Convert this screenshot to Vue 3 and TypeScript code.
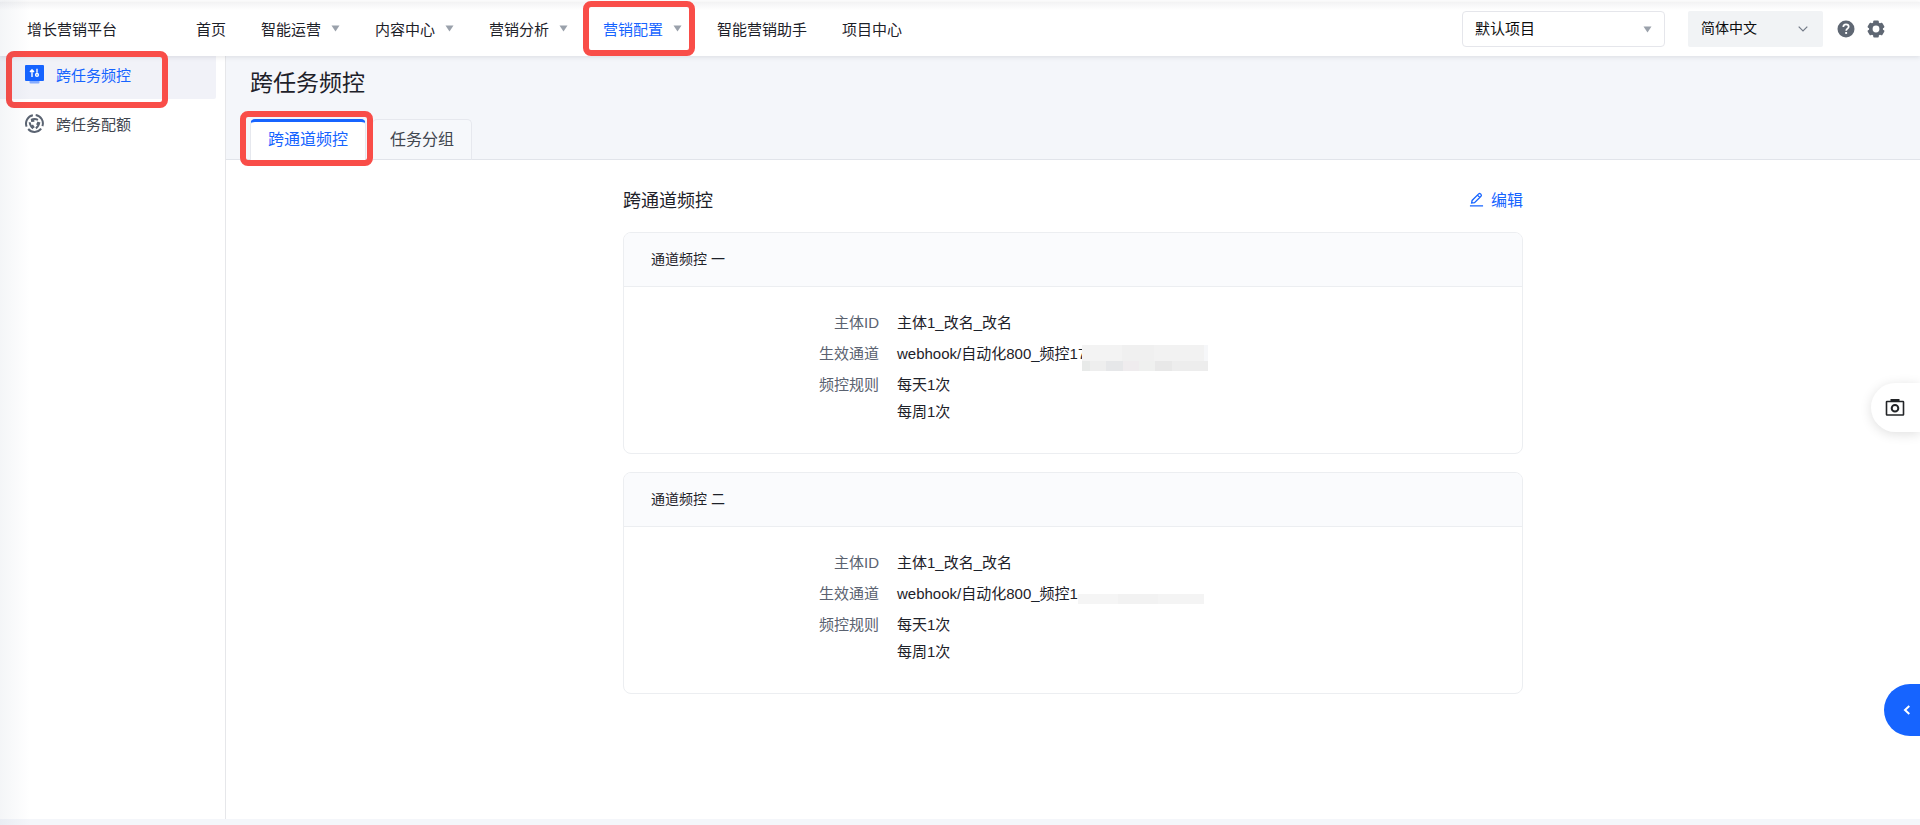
<script setup lang="ts">
import { ref } from 'vue'

interface NavItem {
  label: string
  menu?: boolean
  marked?: boolean
}

interface Rule {
  title: string
  subject: string
  channel: string
  mask: 'tall' | 'thin'
  limits: string[]
}

const navItems: NavItem[] = [
  { label: '首页' },
  { label: '智能运营', menu: true },
  { label: '内容中心', menu: true },
  { label: '营销分析', menu: true },
  { label: '营销配置', menu: true, marked: true },
  { label: '智能营销助手' },
  { label: '项目中心' },
]

const rules: Rule[] = [
  { title: '通道频控 一', subject: '主体1_改名_改名', channel: 'webhook/自动化800_频控17', mask: 'tall', limits: ['每天1次', '每周1次'] },
  { title: '通道频控 二', subject: '主体1_改名_改名', channel: 'webhook/自动化800_频控1', mask: 'thin', limits: ['每天1次', '每周1次'] },
]

const tabs = ['跨通道频控', '任务分组']
const activeTab = ref(0)
const project = ref('默认项目')
const language = ref('简体中文')
</script>

<template>
  <div class="page">
    <header class="topbar">
      <span class="brand">增长营销平台</span>
      <nav class="main-nav" aria-label="主导航">
        <a v-for="item in navItems" :key="item.label" href="#" class="nav-link" :class="{ current: item.marked }">
          {{ item.label }}
          <svg v-if="item.menu" class="caret" viewBox="0 0 9 7" aria-hidden="true"><path d="M.5.5h8L4.500 6.500z" /></svg>
          <span v-if="item.marked" class="callout nav-callout"></span>
        </a>
      </nav>
      <div class="tools">
        <div class="picker project">
          <select v-model="project" aria-label="项目">
            <option>默认项目</option>
          </select>
          <svg class="caret picker-icon" viewBox="0 0 9 7" aria-hidden="true"><path d="M.5.5h8L4.500 6.500z" /></svg>
        </div>
        <div class="picker language">
          <select v-model="language" aria-label="语言">
            <option>简体中文</option>
          </select>
          <svg class="chevron picker-icon" viewBox="0 0 10 6" aria-hidden="true"><path d="M.7.7 5 5 9.300.7" /></svg>
        </div>
        <button type="button" class="icon-button" aria-label="帮助">
          <svg viewBox="0 0 18 18" aria-hidden="true">
            <circle cx="9" cy="9" r="8.500" fill="#5f6773" />
            <path d="M6.300 7.100C6.300 5.300 7.400 4.300 9 4.300s2.700 1 2.700 2.400c0 1.900-2.500 2-2.500 4" fill="none" stroke="#fff" stroke-width="1.700" />
            <rect x="8.200" y="12" width="1.900" height="1.900" fill="#fff" />
          </svg>
        </button>
        <button type="button" class="icon-button" aria-label="设置">
          <svg viewBox="0 0 18 18" aria-hidden="true">
            <circle cx="9" cy="9" r="5.200" fill="none" stroke="#5f6773" stroke-width="3.600" />
            <g fill="#5f6773">
              <rect v-for="n in 6" :key="n" x="6.200" y=".5" width="5.600" height="4" rx="1" :transform="`rotate(${n * 60} 9 9)`" />
            </g>
          </svg>
        </button>
      </div>
    </header>

    <div class="body">
      <aside class="sidebar">
        <nav class="side-nav" aria-label="侧边导航">
          <a href="#" class="side-link selected">
            <svg viewBox="0 0 19 19" aria-hidden="true">
              <rect x="4.500" y="15" width="10" height="3.500" rx="1" fill="#86acff" />
              <rect width="19" height="16" rx="1" fill="#1664ff" />
              <g stroke="#fff" stroke-width="1.400" fill="none">
                <path d="M7 4.500V12M5 7l2-2.200L9 7M12 3.800v4" />
                <circle cx="12" cy="9.900" r="1.400" />
              </g>
            </svg>
            跨任务频控
            <span class="callout side-callout"></span>
          </a>
          <a href="#" class="side-link">
            <svg viewBox="0 0 19 19" aria-hidden="true">
              <g fill="none" stroke="#5b6472" stroke-width="2">
                <g v-for="n in 3" :key="n" :transform="`rotate(${n * 120} 9.500 9.500)`">
                  <path d="M10.700 1.100A8.400 8.400 0 0 1 17.400 12.200" />
                  <path d="M6 5.900Q9.500 4.300 13 5.900" />
                  <path d="M13.400 7.800 12 10.800" />
                </g>
              </g>
            </svg>
            跨任务配额
          </a>
        </nav>
      </aside>

      <main class="main">
        <div class="heading">
          <h1>跨任务频控</h1>
          <div class="tabs" role="tablist">
            <button v-for="(tab, i) in tabs" :key="tab" type="button" role="tab" class="tab" :class="{ active: activeTab === i }" :aria-selected="activeTab === i" @click="activeTab = i">
              {{ tab }}
              <span v-if="i === 0" class="callout tab-callout"></span>
            </button>
          </div>
        </div>

        <section class="content">
          <div class="section-head">
            <h2>跨通道频控</h2>
            <button type="button" class="edit">
              <svg viewBox="0 0 16 16" aria-hidden="true">
                <path d="M2.800 11.800 3.300 9 10.300 2q1-.9 2 0l.5.600q.9 1 0 1.900l-6.900 6.800zM9 3.300l2.500 2.500M1 14.800h14" />
              </svg>
              编辑
            </button>
          </div>

          <article v-for="rule in rules" :key="rule.title" class="card">
            <h3>{{ rule.title }}</h3>
            <dl>
              <dt>主体ID</dt>
              <dd>{{ rule.subject }}</dd>
              <dt>生效通道</dt>
              <dd><span class="masked">{{ rule.channel }}<span class="mask" :class="rule.mask"></span></span></dd>
              <dt>频控规则</dt>
              <dd><div v-for="limit in rule.limits" :key="limit">{{ limit }}</div></dd>
            </dl>
          </article>
        </section>
      </main>
    </div>

    <button type="button" class="float-button capture" aria-label="截图">
      <svg viewBox="0 0 20 20" aria-hidden="true">
        <path d="M5.500 4V1h9v3z" fill="#222427" />
        <rect x="1.500" y="3.500" width="17" height="13.500" rx=".5" fill="none" stroke="#222427" stroke-width="1.600" />
        <circle cx="10" cy="10.300" r="3.300" fill="none" stroke="#222427" stroke-width="2" />
      </svg>
    </button>
    <button type="button" class="float-button expand" aria-label="展开">
      <svg viewBox="0 0 8 10" aria-hidden="true"><path d="M6.300 1 2 5l4.300 4" /></svg>
    </button>
  </div>
</template>

<style>
body {
  margin: 0;
  background: #f4f6fa;
}
</style>

<style scoped>
* {
  box-sizing: border-box;
}

.page {
  position: relative;
  display: flex;
  flex-direction: column;
  min-height: 100vh;
  padding: 2px 0 6px;
  background: linear-gradient(#fff 2px, #f4f6fa 2px);
  font-family: "Liberation Sans", "Noto Sans CJK SC", sans-serif;
  font-size: 15px;
  color: #1d2129;
}

.page::after {
  content: "";
  position: absolute;
  z-index: 4;
  inset: 0 auto 0 0;
  width: 30px;
  background: linear-gradient(90deg, rgba(40, 70, 110, 0.05), rgba(40, 70, 110, 0));
  pointer-events: none;
}

a {
  color: inherit;
  text-decoration: none;
}

button {
  padding: 0;
  border: 0;
  background: none;
  font: inherit;
  cursor: pointer;
}

h1,
h2,
h3,
dl,
dd {
  margin: 0;
  font-weight: 400;
}

.callout {
  position: absolute;
  z-index: 3;
  border: 6px solid #f94d48;
  border-radius: 8px;
  pointer-events: none;
}

.topbar {
  position: relative;
  z-index: 2;
  display: flex;
  align-items: center;
  height: 54px;
  padding: 0 35px 0 27px;
  background: linear-gradient(#f3f3f4, #fff 8px);
  box-shadow: 0 1px 5px rgba(30, 30, 50, 0.12);
}

.brand {
  width: 169px;
  padding-bottom: 2px;
}

.main-nav {
  display: flex;
  gap: 35px;
  height: 100%;
}

.nav-link {
  position: relative;
  display: flex;
  align-items: center;
  gap: 10px;
  padding-bottom: 2px;
  white-space: nowrap;
}

.nav-link.current {
  color: #1664ff;
}

.nav-callout {
  inset: -1px -13px 0 -20px;
}

.caret {
  width: 9px;
  height: 7px;
  fill: #9aa1ab;
}

.tools {
  display: flex;
  align-items: center;
  margin-left: auto;
}

.picker {
  position: relative;
  height: 36px;
}

.picker select {
  width: 100%;
  height: 100%;
  padding: 0 12px 2px;
  border: 1px solid #e5e6eb;
  border-radius: 4px;
  background: #fff;
  appearance: none;
  font: inherit;
  color: #0c0d0e;
}

.picker-icon {
  position: absolute;
  top: 15px;
  right: 13px;
  pointer-events: none;
}

.project {
  width: 203px;
  margin-right: 23px;
}

.language {
  width: 135px;
  margin-right: 14px;
}

.picker.language select {
  padding-left: 13px;
  border: 0;
  border-radius: 2px;
  background: #f1f3f5;
  font-size: 14px;
}

.chevron {
  right: 15px;
  width: 10px;
  height: 6px;
  fill: none;
  stroke: #737a87;
  stroke-width: 1.200;
}

.icon-button {
  width: 18px;
  height: 18px;
}

.icon-button + .icon-button {
  margin-left: 12px;
}

.icon-button svg {
  display: block;
}

.body {
  display: flex;
  flex: 1;
}

.sidebar {
  flex: none;
  width: 225px;
  padding-right: 9px;
  background: #fff;
}

.side-nav {
  display: flex;
  flex-direction: column;
  gap: 2px;
  margin-top: -4px;
}

.side-link {
  position: relative;
  display: flex;
  align-items: center;
  gap: 12px;
  height: 47px;
  padding: 0 0 2px 25px;
  border-radius: 0 2px 2px 0;
  color: #41464f;
}

.side-link svg {
  width: 19px;
  height: 19px;
}

.side-link.selected {
  background: #f1f2f8;
  color: #1664ff;
}

.side-callout {
  inset: -1px 48px -9px 6px;
}

.main {
  flex: 1;
  min-width: 0;
  border-left: 1px solid #e6e7ea;
  background: #fff;
}

.heading {
  height: 104px;
  padding: 10px 24px 0;
  border-bottom: 1px solid #e1e4ea;
  background: #f4f6fa;
}

h1 {
  font-size: 23px;
  line-height: 34px;
}

.tabs {
  display: flex;
  gap: 6px;
  height: 41px;
  margin-top: 19px;
}

.tab {
  position: relative;
  padding: 0 17px 3px;
  border: 1px solid #e6e8ee;
  border-bottom-color: #e1e4ea;
  border-radius: 5px 5px 0 0;
  background: #f6f8fb;
  font-size: 16px;
  color: #41464f;
}

.tab.active {
  padding-bottom: 6px;
  border-top: 3px solid #1664ff;
  border-bottom: 0;
  background: #fff;
  color: #1664ff;
}

.tab-callout {
  inset: -11px -8px -6px -11px;
}

.content {
  width: 900px;
  max-width: 100%;
  margin: 0 auto;
  padding: 23px 0;
}

.section-head {
  display: flex;
  align-items: center;
  justify-content: space-between;
  height: 32px;
  margin-bottom: 17px;
}

h2 {
  font-size: 18px;
}

.edit {
  display: flex;
  align-items: center;
  gap: 7px;
  font-size: 16px;
  color: #1664ff;
}

.edit svg {
  width: 15px;
  height: 15px;
  fill: none;
  stroke: currentColor;
  stroke-width: 1.400;
}

.card {
  overflow: hidden;
  border: 1px solid #eceef1;
  border-radius: 8px;
  background: #fff;
}

.card + .card {
  margin-top: 18px;
}

h3 {
  padding: 0 27px;
  border-bottom: 1px solid #eceef1;
  background: #fafbfd;
  font-size: 14px;
  line-height: 53px;
}

dl {
  display: grid;
  grid-template-columns: 255px 1fr;
  gap: 4px 18px;
  padding: 22px 0 28px;
  line-height: 27px;
}

dt {
  text-align: right;
  color: #5a6270;
}

.masked {
  position: relative;
}

.mask {
  position: absolute;
  left: 100%;
  width: 126px;
}

.mask.tall {
  top: 0;
  height: 26px;
  margin-left: -4px;
  background:
    linear-gradient(90deg, #e8eae9 8px, #eeeeee 8px 24px, #e6e7e9 24px 41px, #efecee 41px 57px, #eff0ef 57px 73px, #e8e8e8 73px 90px, #ededed 90px) bottom / 100% 10px no-repeat,
    linear-gradient(90deg, #f3f3f3 40px, #f0f0f0 40px 72px, #f2f2f2 72px 122px, #f6f7f9 122px);
}

.mask.thin {
  bottom: -2px;
  height: 10px;
  background: linear-gradient(90deg, #f5f5f5 40px, #f2f2f2 40px 80px, #f4f4f4 80px);
}

.float-button {
  position: fixed;
  z-index: 3;
  right: 0;
  display: flex;
  align-items: center;
}

.capture {
  top: 383px;
  width: 49px;
  height: 49px;
  padding-left: 14px;
  border-radius: 25px 0 0 25px;
  background: #fff;
  box-shadow: 0 2px 12px rgba(0, 0, 0, 0.13);
}

.capture svg {
  width: 20px;
  height: 20px;
}

.expand {
  bottom: 89px;
  width: 36px;
  height: 52px;
  padding-left: 19px;
  border-radius: 26px 0 0 26px;
  background: #1664ff;
}

.expand svg {
  width: 8px;
  height: 10px;
  fill: none;
  stroke: #fff;
  stroke-width: 2;
}
</style>
